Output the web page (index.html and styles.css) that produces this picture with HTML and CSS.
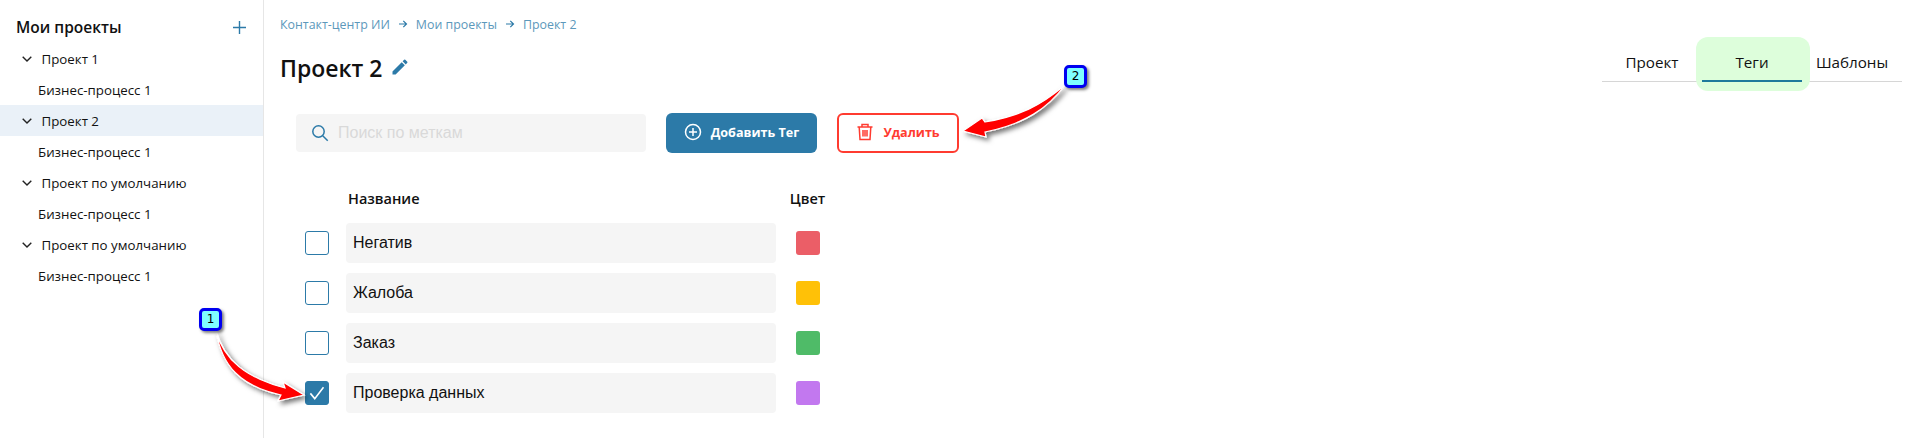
FILE: index.html
```html
<!DOCTYPE html>
<html lang="ru">
<head>
<meta charset="utf-8">
<title>Теги</title>
<link rel="stylesheet" href="styles.css">
</head>
<body>
<div class="app">
  <aside class="sidebar">
    <div class="side-head">
      <span class="side-title">Мои проекты</span>
      <svg class="plus" viewBox="0 0 14 14"><path d="M7 0v14M0 7h14"/></svg>
    </div>
    <div class="item project"><svg class="chev" viewBox="0 0 10 6"><path d="M.7.7 5 5l4.300-4.300"/></svg>Проект 1</div>
    <div class="item process">Бизнес-процесс 1</div>
    <div class="item project active"><svg class="chev" viewBox="0 0 10 6"><path d="M.7.7 5 5l4.300-4.300"/></svg>Проект 2</div>
    <div class="item process">Бизнес-процесс 1</div>
    <div class="item project"><svg class="chev" viewBox="0 0 10 6"><path d="M.7.7 5 5l4.300-4.300"/></svg>Проект по умолчанию</div>
    <div class="item process">Бизнес-процесс 1</div>
    <div class="item project"><svg class="chev" viewBox="0 0 10 6"><path d="M.7.7 5 5l4.300-4.300"/></svg>Проект по умолчанию</div>
    <div class="item process">Бизнес-процесс 1</div>
  </aside>
  <main class="main">
    <div class="top">
      <div class="heading">
        <nav class="crumbs">
          <span>Контакт-центр ИИ</span>
          <svg class="crumb-arrow" viewBox="0 0 10 10"><path d="M1 5h7.500M5.300 1.800 8.500 5 5.300 8.200"/></svg>
          <span>Мои проекты</span>
          <svg class="crumb-arrow" viewBox="0 0 10 10"><path d="M1 5h7.500M5.300 1.800 8.500 5 5.300 8.200"/></svg>
          <span>Проект 2</span>
        </nav>
        <div class="title-row">
          <h1 class="title">Проект 2</h1>
          <svg class="pencil" viewBox="0 0 24 24"><path d="M3 17.250V21h3.750L17.810 9.940l-3.750-3.750L3 17.250zM20.710 7.040a1 1 0 0 0 0-1.410l-2.340-2.340a1 1 0 0 0-1.410 0l-1.830 1.830 3.750 3.750 1.830-1.830z"/></svg>
        </div>
      </div>
      <div class="tabs">
        <div class="tab">Проект</div>
        <div class="tab current"><span class="tab-label">Теги</span></div>
        <div class="tab">Шаблоны</div>
      </div>
    </div>
    <div class="toolbar">
      <label class="search">
        <svg class="search-icon" viewBox="0 0 18 18"><circle cx="7.500" cy="7.500" r="5.700"/><path d="m11.700 11.700 5 5"/></svg>
        <span class="placeholder">Поиск по меткам</span>
      </label>
      <button class="btn btn-add">
        <svg class="btn-icon" viewBox="0 0 18 18"><circle cx="9" cy="9" r="7.500"/><path d="M9 5v8M5 9h8"/></svg>
        Добавить Тег
      </button>
      <button class="btn btn-del">
        <svg class="btn-icon" viewBox="0 0 18 18"><path d="M1.500 4h15M6 4V1.500h6V4M3.200 4l.8 12.500h10L14.800 4M7 7v6.500M9 7v6.500M11 7v6.500"/></svg>
        Удалить
      </button>
    </div>
    <div class="table">
      <div class="th th-name">Название</div>
      <div class="th th-color">Цвет</div>

      <span class="check"></span>
      <div class="field">Негатив</div>
      <span class="swatch red"></span>

      <span class="check"></span>
      <div class="field">Жалоба</div>
      <span class="swatch yellow"></span>

      <span class="check"></span>
      <div class="field">Заказ</div>
      <span class="swatch green"></span>

      <span class="check checked"><svg viewBox="0 0 24 24"><path d="m5 13 5 6L20 6"/></svg></span>
      <div class="field">Проверка данных</div>
      <span class="swatch violet"></span>
    </div>
  </main>
</div>

<svg class="arrows" viewBox="0 0 1912 438">
  <defs>
    <filter id="drop" x="-30%" y="-30%" width="170%" height="170%">
      <feDropShadow dx="3" dy="3" stdDeviation="2.500" flood-color="#000" flood-opacity=".55"/>
    </filter>
  </defs>
  <g filter="url(#drop)">
    <path class="arrow" d="M216 331C224 360 246 378 285 388L283 382 304 395 278 401 281 395C240 386 222 366 216 331Z"/>
    <path class="arrow" d="M1065 85C1040 106 1020 116 985 122L982 118 963 131 986 137 985 132C1025 124 1048 108 1065 85Z"/>
  </g>
</svg>
<span class="badge badge-one">1</span>
<span class="badge badge-two">2</span>
</body>
</html>
```

FILE: styles.css
```css
* { box-sizing: border-box; }
html, body { margin: 0; height: 100%; background: #fff; overflow: hidden; }
body {
  position: relative;
  font-family: "Open Sans", "Noto Sans", sans-serif;
  color: #111;
}
.app { display: flex; height: 438px; }

.sidebar {
  flex: 0 0 264px;
  border-right: 1px solid #e6e6e6;
  font-size: 13.300px;
}
.side-head {
  display: flex;
  align-items: center;
  justify-content: space-between;
  height: 43px;
  padding: 11px 17px 0 16px;
}
.side-title { font-size: 15.500px; font-weight: 600; color: #111; }
.plus { width: 13px; height: 13px; fill: none; stroke: #2c7aa8; stroke-width: 1.500; }
.item { display: flex; align-items: center; height: 31px; }
.project { padding-left: 22px; }
.process { padding-left: 38px; }
.active { background: #eaf1f8; }
.chev { width: 10px; height: 6px; margin-right: 9.500px; fill: none; stroke: #222; stroke-width: 1.400; }

.main { flex: 1; min-width: 0; padding: 14px 10px 0 16px; }
.top { display: flex; justify-content: space-between; }
.crumbs {
  display: flex;
  align-items: center;
  gap: 8px;
  height: 20px;
  font-size: 12.400px;
  color: #5c98bb;
}
.crumb-arrow { width: 10px; height: 10px; fill: none; stroke: #2c7aa8; stroke-width: 1.200; }
.title-row { display: flex; align-items: center; gap: 7px; height: 36px; margin-top: 16px; }
.title { margin: 0; font-size: 23px; font-weight: 600; color: #111; }
.pencil { width: 20px; height: 20px; margin-top: -2px; fill: #2c7aa8; }

.tabs {
  display: flex;
  align-self: flex-start;
  width: 300px;
  height: 35px;
  margin-top: 33px;
  border-bottom: 1px solid #d6d6d6;
  font-size: 15.200px;
}
.tab { position: relative; flex: 0 0 100px; text-align: center; line-height: 31px; }
.tab.current::before {
  content: "";
  position: absolute;
  inset: -10px -8px -10px -6px;
  background: #ddfedb;
  border-radius: 12px;
}
.tab.current::after {
  content: "";
  position: absolute;
  left: 0;
  right: 0;
  bottom: -1px;
  height: 2px;
  background: #1f7a9c;
}
.tab-label { position: relative; }

.toolbar { display: flex; align-items: center; gap: 20px; height: 40px; margin: 27px 0 0 16px; }
.search {
  display: flex;
  align-items: center;
  gap: 9px;
  width: 350px;
  height: 38px;
  padding-left: 15px;
  background: #f5f5f5;
  border-radius: 4px;
}
.search-icon { width: 18px; height: 18px; fill: none; stroke: #2c7aa8; stroke-width: 1.500; }
.placeholder { font-family: "Liberation Sans", sans-serif; font-size: 16px; color: #d9d9d9; }
.btn {
  display: flex;
  align-items: center;
  justify-content: center;
  gap: 9px;
  height: 40px;
  padding: 0 0 2px;
  border-radius: 6px;
  font-family: "Open Sans", sans-serif;
  font-size: 12.600px;
  font-weight: 700;
}
.btn-add { width: 151px; background: #2c7aa8; border: 0; color: #fff; }
.btn-del { width: 122px; background: #fff; border: 2px solid #ff3b30; color: #ff3b30; }
.btn-icon { width: 18px; height: 18px; fill: none; stroke: currentColor; stroke-width: 1.500; }

.table {
  display: grid;
  grid-template-columns: 24px 430px 24px;
  column-gap: 17px;
  row-gap: 10px;
  align-items: center;
  justify-items: start;
  margin: 36px 0 0 25px;
}
.th { height: 20px; line-height: 20px; font-size: 14.500px; font-weight: 600; color: #111; }
.th-name { grid-column: 2; padding-left: 2px; margin-bottom: 4px; }
.th-color { grid-column: 3; justify-self: center; margin: 0 0 4px 5px; white-space: nowrap; }
.check {
  width: 24px;
  height: 24px;
  border: 1.500px solid #2c7aa8;
  border-radius: 3px;
  background: #fff;
}
.checked { background: #2c7aa8; }
.checked svg { display: block; width: 21px; height: 21px; fill: none; stroke: #fff; stroke-width: 1.800; }
.field {
  display: flex;
  align-items: center;
  width: 430px;
  height: 40px;
  padding-left: 7px;
  background: #f5f5f5;
  border-radius: 4px;
  font-family: "Liberation Sans", sans-serif;
  font-size: 16px;
  color: #111;
}
.swatch { width: 24px; height: 24px; margin-left: 3px; border-radius: 3px; }
.red { background: #eb5e67; }
.yellow { background: #ffc107; }
.green { background: #4fbb68; }
.violet { background: #c278ef; }

.arrows { position: absolute; left: 0; top: 0; width: 1912px; height: 438px; pointer-events: none; }
.arrow { fill: #f00; stroke: #fff; stroke-width: 1.200; }
.badge {
  position: absolute;
  width: 23px;
  height: 23px;
  border: 3px solid #0000f0;
  border-radius: 5px;
  background: #7fffff;
  box-shadow: 2px 2px 3px rgba(0, 0, 0, .5);
  font-family: "DejaVu Sans", sans-serif;
  font-size: 12px;
  line-height: 17px;
  text-align: center;
  color: #000;
}
.badge-one { left: 199px; top: 308px; }
.badge-two { left: 1064px; top: 65px; }
```
